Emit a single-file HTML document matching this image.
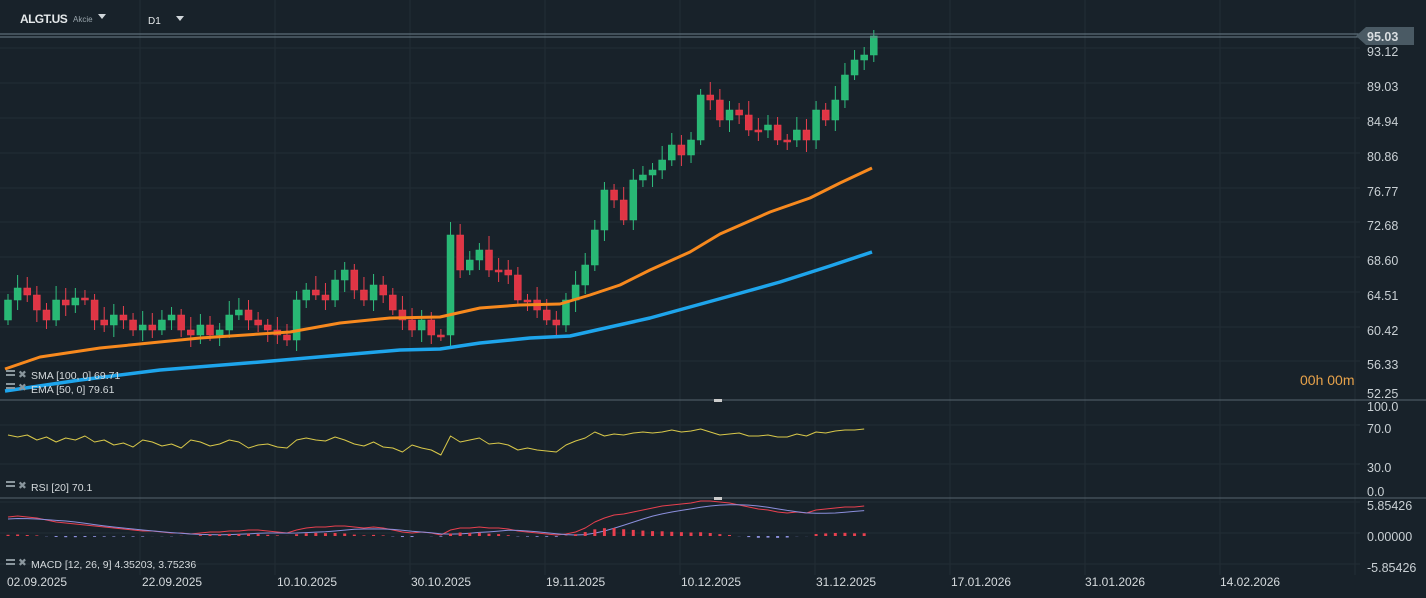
<!DOCTYPE html><html><head><style>
body{margin:0;background:#18222a;width:1426px;height:598px;overflow:hidden;font-family:"Liberation Sans",sans-serif}
svg{display:block}
text{font-family:"Liberation Sans",sans-serif}
</style></head><body>
<svg id="s" width="1426" height="598" xmlns="http://www.w3.org/2000/svg">
<rect width="1426" height="598" fill="#18222a"/>
<g id="grid" stroke="#222d35" stroke-width="1"></g>
<g id="c"></g>
<line x1="0" y1="34" x2="1360" y2="34" stroke="#6c7f8a"/>
<line x1="0" y1="37" x2="1360" y2="37" stroke="#6c7f8a"/>
<polygon points="1356,36 1366,27 1414,27 1414,45 1366,45" fill="#4a5a64"/>
<g font-size="12.5" fill="#d8dde0" font-weight="bold">
<text x="1367" y="41">95.03</text>
</g>
<g id="ax" font-size="12.5" fill="#c9d0d4"></g>
<line x1="0" y1="400" x2="1426" y2="400" stroke="#56646e"/>
<line x1="0" y1="498" x2="1426" y2="498" stroke="#56646e"/>
<rect x="714" y="399" width="8" height="3" fill="#ccc"/>
<rect x="714" y="497" width="8" height="3" fill="#ccc"/>
<text x="20" y="23" font-size="12" font-weight="bold" fill="#e4e8ea" letter-spacing="-0.6">ALGT.US</text>
<text x="73" y="22" font-size="8" fill="#9aa6ad">Akcie</text>
<polygon points="98,14 106,14 102,19" fill="#d0d6da"/>
<text x="148" y="24" font-size="10" fill="#e4e8ea">D1</text>
<polygon points="176,16 184,16 180,21" fill="#d0d6da"/>
<text x="1300" y="385" font-size="14" fill="#e7a24a">00h 00m</text>
<g font-size="10.5" fill="#d5dadd">
<text x="31" y="379">SMA  [100,  0] 69.71</text>
<text x="31" y="393">EMA  [50,  0] 79.61</text>
<text x="31" y="491">RSI  [20]  70.1</text>
<text x="31" y="568">MACD  [12,  26,  9]  4.35203,   3.75236</text>
<text x="18" y="378" fill="#8a969d">✖</text><text x="18" y="391" fill="#8a969d">✖</text>
<text x="18" y="489" fill="#8a969d">✖</text><text x="18" y="566" fill="#8a969d">✖</text>
</g>
<g fill="#8a969d"><rect x="6" y="370" width="9" height="2"/><rect x="6" y="374" width="9" height="2"/><rect x="6" y="383" width="9" height="2"/><rect x="6" y="387" width="9" height="2"/><rect x="6" y="481" width="9" height="2"/><rect x="6" y="485" width="9" height="2"/><rect x="6" y="559" width="9" height="2"/><rect x="6" y="563" width="9" height="2"/></g>
<g font-size="12" fill="#d5dadd">
<text x="7" y="586">02.09.2025</text><text x="142" y="586">22.09.2025</text><text x="277" y="586">10.10.2025</text><text x="411" y="586">30.10.2025</text><text x="546" y="586">19.11.2025</text><text x="681" y="586">10.12.2025</text><text x="816" y="586">31.12.2025</text><text x="951" y="586">17.01.2026</text><text x="1085" y="586">31.01.2026</text><text x="1220" y="586">14.02.2026</text>
</g>
</svg>
<script>
const s='http://www.w3.org/2000/svg',C=document.getElementById('c'),G=document.getElementById('grid'),A=document.getElementById('ax');
function el(t,a,p){const e=document.createElementNS(s,t);for(const k in a)e.setAttribute(k,a[k]);(p||C).appendChild(e);return e}
[140,275,410,545,680,815,950,1085,1220,1355].forEach(x=>el('line',{x1:x,y1:0,x2:x,y2:575},G));
const L=[[52,'93.12'],[87,'89.03'],[122,'84.94'],[157,'80.86'],[192,'76.77'],[226,'72.68'],[261,'68.60'],[296,'64.51'],[331,'60.42'],[365,'56.33'],[394,'52.25'],[407,'100.0'],[429,'70.0'],[468,'30.0'],[492,'0.0'],[506,'5.85426'],[537,'0.00000'],[568,'-5.85426']];
L.forEach(([y,t])=>{if(y!=394&&y!=407&&y!=492)el('line',{x1:0,y1:y-4,x2:1360,y2:y-4},G);const e=el('text',{x:1367,y:y+4},A);e.textContent=t;});
const cl=[300,288,295,310,320,300,305,298,300,320,325,315,320,330,325,330,320,315,330,335,325,335,330,315,310,320,325,330,335,340,300,290,295,300,280,270,290,300,285,295,310,320,330,320,335,335,235,270,260,250,270,270,275,300,300,310,320,325,300,285,265,230,190,200,220,180,175,170,160,145,155,140,95,100,120,110,115,130,130,125,140,140,130,140,110,120,100,75,60,55,36];
let o=320;cl.forEach((c,i)=>{const x=8+i*9.62;const up=c<o;const col=up?'#2fbf7f':'#e8404f';const t=Math.min(o,c),b=Math.max(o,c);
el('line',{x1:x,y1:t-6-(i*7%9),x2:x,y2:b+5+(i*5%8),stroke:col});el('rect',{x:x-3.5,y:t,width:7,height:Math.max(2,b-t),fill:up?'#28b874':'#e03545',stroke:col,'stroke-width':0.5});o=c;});
function pl(pts,col,w){el('polyline',{points:pts.map(p=>p.join(',')).join(' '),fill:'none',stroke:col,'stroke-width':w,'stroke-linejoin':'round'})}
pl([[5,369],[40,357],[100,348],[200,338],[290,332],[340,323],[390,318],[440,317],[480,308],[520,305],[560,304],[590,295],[620,285],[650,270],[690,252],[720,234],[770,212],[810,198],[840,183],[872,168]],'#f7891e',3);
pl([[5,391],[80,380],[160,370],[260,362],[330,356],[400,350],[440,349],[480,343],[530,338],[570,336],[610,327],[650,318],[690,307],[730,296],[780,282],[830,266],[872,252]],'#1ea5ec',3.5);
const r=[435,437,435,440,437,442,438,440,436,442,440,445,443,447,440,442,446,444,448,440,442,446,444,440,442,448,445,444,447,448,440,438,440,441,437,440,444,446,442,447,448,452,445,448,450,455,436,442,440,438,444,443,445,450,448,450,451,452,445,441,438,432,436,434,435,433,432,433,432,430,432,431,429,432,435,434,433,436,436,435,437,437,434,436,432,433,431,430,430,429];
pl(r.map((y,i)=>[8+i*9.62,y]),'#d8c84a',1);
const m=[517,516,517,518,520,522,523,524,525,526,527,528,529,530,531,531,532,533,533,534,533,532,532,531,531,530,530,531,532,533,530,528,527,527,526,526,527,528,527,528,530,532,533,532,533,535,530,528,528,527,528,528,529,531,532,533,534,535,534,532,528,522,518,515,514,512,510,508,506,505,504,503,501,501,502,503,505,507,509,510,512,513,512,513,510,509,508,507,507,506];
const sg=m.map((v,i)=>{let a=0,n=0;for(let j=Math.max(0,i-6);j<=i;j++){a+=m[j];n++}return a/n+2});
pl(m.map((y,i)=>[8+i*9.62,y]),'#e8404f',1);pl(sg.map((y,i)=>[8+i*9.62,y]),'#8b8fdc',1);
m.forEach((y,i)=>{const h=(sg[i]-y)*0.6;const x=8+i*9.62-1.5;if(h>0)el('rect',{x,y:536-h,width:3,height:h,fill:'#e8404f'});else el('rect',{x,y:536,width:3,height:-h,fill:'#8b8fdc'});});
</script>
</body></html>
